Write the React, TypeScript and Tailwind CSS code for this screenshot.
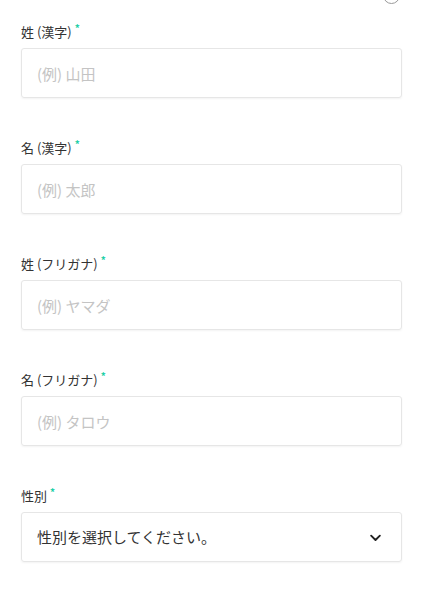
import React from "react";

const font = { fontFamily: '"Noto Sans CJK JP", "Noto Sans", sans-serif' };

function Label({ text }: { text: string }) {
  return (
    <div className="flex items-start h-[20px] mb-[6px] text-[13px] leading-[20px] text-[#333333]">
      <span>{text}</span>
      <span className="ml-[3px] mt-[1px] text-[#1ecfa8] text-[10px] leading-[10px] font-bold">*</span>
    </div>
  );
}

function Field({ label, placeholder }: { label: string; placeholder: string }) {
  return (
    <div className="mb-[40px]">
      <Label text={label} />
      <input
        placeholder={placeholder}
        className="w-full h-[50px] border border-[#e6e6e6] rounded-[3px] px-[15px] text-[15px] text-[#333] placeholder:text-[#c4c4c4] shadow-[0_1px_2px_rgba(0,0,0,0.05)] outline-none"
        style={font}
      />
    </div>
  );
}

export default function App() {
  return (
    <div className="w-[423px] h-[600px] bg-white overflow-hidden relative" style={font}>
      <div className="absolute left-[383px] top-[-13px] w-[17px] h-[17px] rounded-full border border-[#9a9a9a]" />
      <div className="px-[21px] pt-[22px] w-[423px]">
        <Field label="姓 (漢字)" placeholder="(例) 山田" />
        <Field label="名 (漢字)" placeholder="(例) 太郎" />
        <Field label="姓 (フリガナ)" placeholder="(例) ヤマダ" />
        <Field label="名 (フリガナ)" placeholder="(例) タロウ" />
        <div>
          <Label text="性別" />
          <div className="w-full h-[50px] border border-[#e6e6e6] rounded-[3px] pl-[15px] pr-[18px] flex items-center justify-between shadow-[0_1px_2px_rgba(0,0,0,0.05)]">
            <span className="text-[15px] text-[#333]">性別を選択してください。</span>
            <svg width="15" height="15" viewBox="0 0 24 24" fill="none" stroke="#222" strokeWidth="3" strokeLinecap="round" strokeLinejoin="round">
              <path d="M5 9l7 7 7-7" />
            </svg>
          </div>
        </div>
      </div>
    </div>
  );
}
